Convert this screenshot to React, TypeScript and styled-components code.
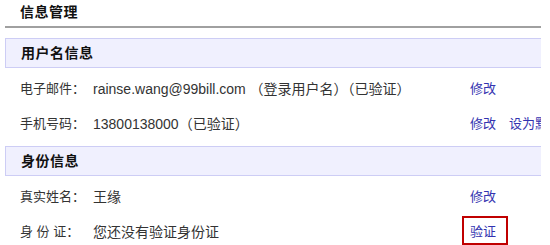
import React from "react";
import styled, { createGlobalStyle } from "styled-components";

const GlobalStyle = createGlobalStyle`
  body {
    margin: 0;
    background: #fff;
    font-family: "Liberation Sans", "Noto Sans CJK SC", sans-serif;
    color: #333;
  }
`;

const Page = styled.div`
  width: 536px;
  margin-left: 5px;
  overflow: hidden;
`;

const Title = styled.h1`
  margin: 0;
  height: 26px;
  padding-left: 15px;
  line-height: 24px;
  font-size: 14px;
  font-weight: bold;
  letter-spacing: 0.5px;
  color: #111;
  border-bottom: 2px solid #a0a0a0;
`;

const Section = styled.section`
  margin-top: 10px;

  & + & {
    margin-top: 2px;
  }
`;

const SectionHead = styled.h2`
  margin: 0;
  width: 560px;
  height: 28px;
  padding-left: 15px;
  line-height: 28px;
  font-size: 14px;
  font-weight: bold;
  letter-spacing: 0.5px;
  color: #111;
  background: #f0f0fe;
  border: 1px solid #cdcdf5;
  border-right: none;
`;

const Rows = styled.div`
  padding: 2px 0 4px;
`;

const Row = styled.div`
  display: grid;
  grid-template-columns: 88px 377px max-content;
  align-items: center;
  height: 35px;
  white-space: nowrap;
  font-size: 13px;
`;

const Label = styled.span`
  padding-left: 15px;
  color: #333;
`;

const Value = styled.span`
  font-size: 14px;
  color: #333;
`;

const Actions = styled.span`
  display: flex;
  align-items: center;
  gap: 13px;
`;

type LinkProps = {
  $marked?: boolean;
};

const Action = styled.a<LinkProps>`
  color: #3333b0;
  text-decoration: none;
  cursor: pointer;
  ${({ $marked }) =>
    $marked &&
    `
    margin-left: -8px;
    padding: 3px 10px 3px 6px;
    border: 2px solid #c00000;
  `}
`;

type Item = {
  label: string;
  value: string;
  actions: { text: string; marked?: boolean }[];
};

const sections: { title: string; items: Item[] }[] = [
  {
    title: "用户名信息",
    items: [
      {
        label: "电子邮件：",
        value: "rainse.wang@99bill.com （登录用户名）（已验证）",
        actions: [{ text: "修改" }],
      },
      {
        label: "手机号码：",
        value: "13800138000（已验证）",
        actions: [{ text: "修改" }, { text: "设为默认" }],
      },
    ],
  },
  {
    title: "身份信息",
    items: [
      { label: "真实姓名：", value: "王缘", actions: [{ text: "修改" }] },
      {
        label: "身 份 证：",
        value: "您还没有验证身份证",
        actions: [{ text: "验证", marked: true }],
      },
    ],
  },
];

export default function App(): JSX.Element {
  return (
    <>
      <GlobalStyle />
      <Page>
        <Title>信息管理</Title>
        {sections.map((section) => (
          <Section key={section.title}>
            <SectionHead>{section.title}</SectionHead>
            <Rows>
              {section.items.map((item) => (
                <Row key={item.label}>
                  <Label>{item.label}</Label>
                  <Value>{item.value}</Value>
                  <Actions>
                    {item.actions.map((a) => (
                      <Action key={a.text} $marked={a.marked}>
                        {a.text}
                      </Action>
                    ))}
                  </Actions>
                </Row>
              ))}
            </Rows>
          </Section>
        ))}
      </Page>
    </>
  );
}
